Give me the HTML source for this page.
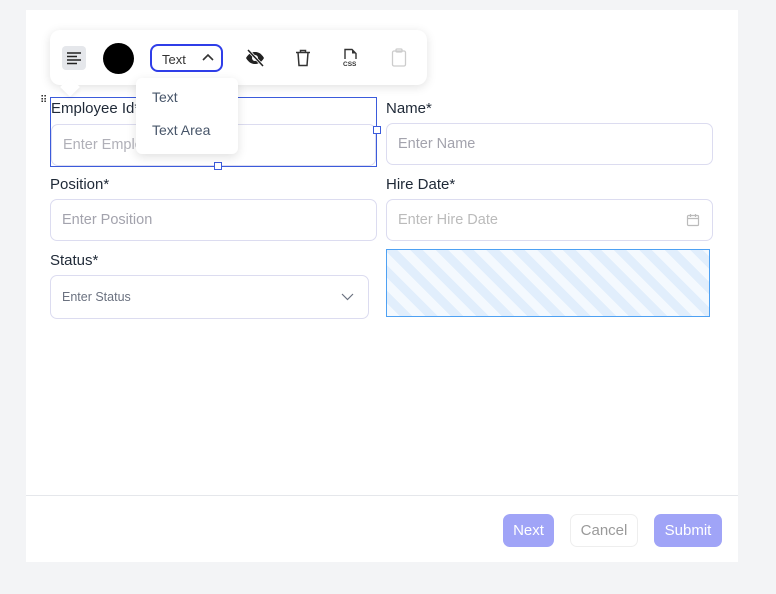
<!DOCTYPE html>
<html><head><meta charset="utf-8"><style>
*{box-sizing:border-box;margin:0;padding:0}
body{width:776px;height:594px;background:#f3f4f6;font-family:"Liberation Sans",sans-serif;position:relative;overflow:hidden}
.card{position:absolute;left:26px;top:10px;width:712px;height:552px;background:#fff}
.abs{position:absolute}
.lbl{font-size:15px;color:#1f2937}
.inp{position:absolute;border:1px solid #dcdcf0;border-radius:7px;background:#fff;font-size:14.5px;color:#a3a3ad;padding-left:11px;display:flex;align-items:center}
.btn{position:absolute;top:514px;height:33px;border-radius:7px;font-size:15px;display:flex;align-items:center;justify-content:center}
</style></head><body>
<div class="card"></div>
<!-- fields -->
<div class="abs lbl" style="left:51px;top:100px">Employee Id*</div>
<div class="inp" style="left:51px;top:124px;width:325px;height:42px;color:#b0b0b8">Enter Employee Id</div>
<div class="abs" style="left:50px;top:97px;width:327px;height:70px;border:1px solid #3b5bdb"></div>
<div class="abs" style="left:373px;top:126px;width:8px;height:8px;border:1px solid #3b5bdb;background:#fff"></div>
<div class="abs" style="left:214px;top:162px;width:8px;height:8px;border:1px solid #3b5bdb;background:#fff"></div>
<div class="abs" style="left:40px;top:98px;font-size:10px;line-height:5px;letter-spacing:-1px;color:#222">⠿</div>

<div class="abs lbl" style="left:386px;top:100px">Name*</div>
<div class="inp" style="left:386px;top:123px;width:327px;height:42px">Enter Name</div>

<div class="abs lbl" style="left:50px;top:176px">Position*</div>
<div class="inp" style="left:50px;top:199px;width:327px;height:42px">Enter Position</div>

<div class="abs lbl" style="left:386px;top:176px">Hire Date*</div>
<div class="inp" style="left:386px;top:199px;width:327px;height:42px;color:#bbb">Enter Hire Date
<svg class="abs" style="right:12px;top:13px" width="14" height="14" viewBox="0 0 14 14" fill="none" stroke="#bbb" stroke-width="1.2"><rect x="1.5" y="2.5" width="11" height="10" rx="1"/><path d="M1.5 5.5h11M4.5 1v3M9.5 1v3"/></svg></div>

<div class="abs lbl" style="left:50px;top:252px">Status*</div>
<div class="inp" style="left:50px;top:275px;width:319px;height:44px;font-size:12.5px;color:#6b7280">Enter Status
<svg class="abs" style="right:14px;top:17px" width="13" height="8" viewBox="0 0 13 8" fill="none" stroke="#6b7280" stroke-width="1.2"><path d="M1 1l5.5 5.5L12 1"/></svg></div>

<div class="abs" style="left:386px;top:249px;width:324px;height:68px;border:1px solid #4ea1f3;background:repeating-linear-gradient(45deg,#f4f9fe 0 9px,#e1eefc 9px 18px)"></div>

<!-- footer -->
<div class="abs" style="left:26px;top:495px;width:712px;height:1px;background:#e5e7eb"></div>
<div class="btn" style="left:503px;width:51px;background:#a0a4f7;color:#fff">Next</div>
<div class="btn" style="left:570px;width:68px;border:1px solid #eee;color:#9a9a9a;background:#fff">Cancel</div>
<div class="btn" style="left:654px;width:68px;background:#a0a4f7;color:#fff">Submit</div>

<!-- toolbar -->
<div class="abs" style="left:50px;top:30px;width:377px;height:55px;background:#fff;border-radius:10px;box-shadow:0 2px 10px rgba(0,0,0,.12)"></div>
<div class="abs" style="left:63px;top:80px;width:14px;height:14px;background:#fff;transform:rotate(45deg);box-shadow:2px 2px 3px rgba(0,0,0,.05)"></div>
<div class="abs" style="left:62px;top:46px;width:24px;height:24px;background:#e5e7eb;border-radius:4px"></div>
<svg class="abs" style="left:66px;top:51px" width="16" height="14" viewBox="0 0 16 14" stroke="#222" stroke-width="1.4"><path d="M1 2h14M1 5.5h10M1 9h14M1 12.5h10"/></svg>
<div class="abs" style="left:103px;top:43px;width:31px;height:31px;border-radius:50%;background:#000"></div>
<div class="abs" style="left:150px;top:44px;width:73px;height:28px;border:2px solid #2f3ee8;border-radius:8px;font-size:13px;color:#333;padding:6px 0 0 10px">Text
<svg class="abs" style="left:50px;top:7px" width="12" height="8" viewBox="0 0 12 8" fill="none" stroke="#333" stroke-width="1.6"><path d="M1 7l5-5 5 5"/></svg></div>
<svg class="abs" style="left:245px;top:49px" width="20" height="18" viewBox="0 0 20 18"><path d="M1 9c3-5 6-6 9-6s6 1 9 6c-3 5-6 6-9 6s-6-1-9-6z" fill="#222"/><circle cx="10" cy="9" r="3" fill="#fff"/><path d="M3 1l15 16" stroke="#fff" stroke-width="3"/><path d="M3 1l15 16" stroke="#222" stroke-width="1.5"/></svg>
<svg class="abs" style="left:295px;top:49px" width="16" height="18" viewBox="0 0 16 18" fill="none" stroke="#333" stroke-width="1.5"><path d="M1 3.5h14M5.5 3.5V1.5h5v2M3 3.5l1 13h8l1-13"/></svg>
<svg class="abs" style="left:342px;top:48px" width="18" height="20" viewBox="0 0 18 20"><path d="M3 11V1.5h7l4 4V11" fill="none" stroke="#333" stroke-width="1.4"/><path d="M10 1.5v4h4" fill="#333"/><text x="1" y="18" font-family="Liberation Sans" font-size="6.5" font-weight="bold" fill="#333">CSS</text></svg>
<svg class="abs" style="left:391px;top:48px" width="16" height="19" viewBox="0 0 16 19" fill="none" stroke="#ccc" stroke-width="1.3"><rect x="1.5" y="3" width="13" height="15" rx="1.5"/><rect x="5" y="1" width="6" height="3" rx="1"/></svg>

<!-- dropdown -->
<div class="abs" style="left:136px;top:78px;width:102px;height:76px;background:#fff;border-radius:6px;box-shadow:0 3px 10px rgba(0,0,0,.12)"></div>
<div class="abs" style="left:152px;top:89px;font-size:14px;color:#475569">Text</div>
<div class="abs" style="left:152px;top:122px;font-size:14px;color:#475569">Text Area</div>
</body></html>
